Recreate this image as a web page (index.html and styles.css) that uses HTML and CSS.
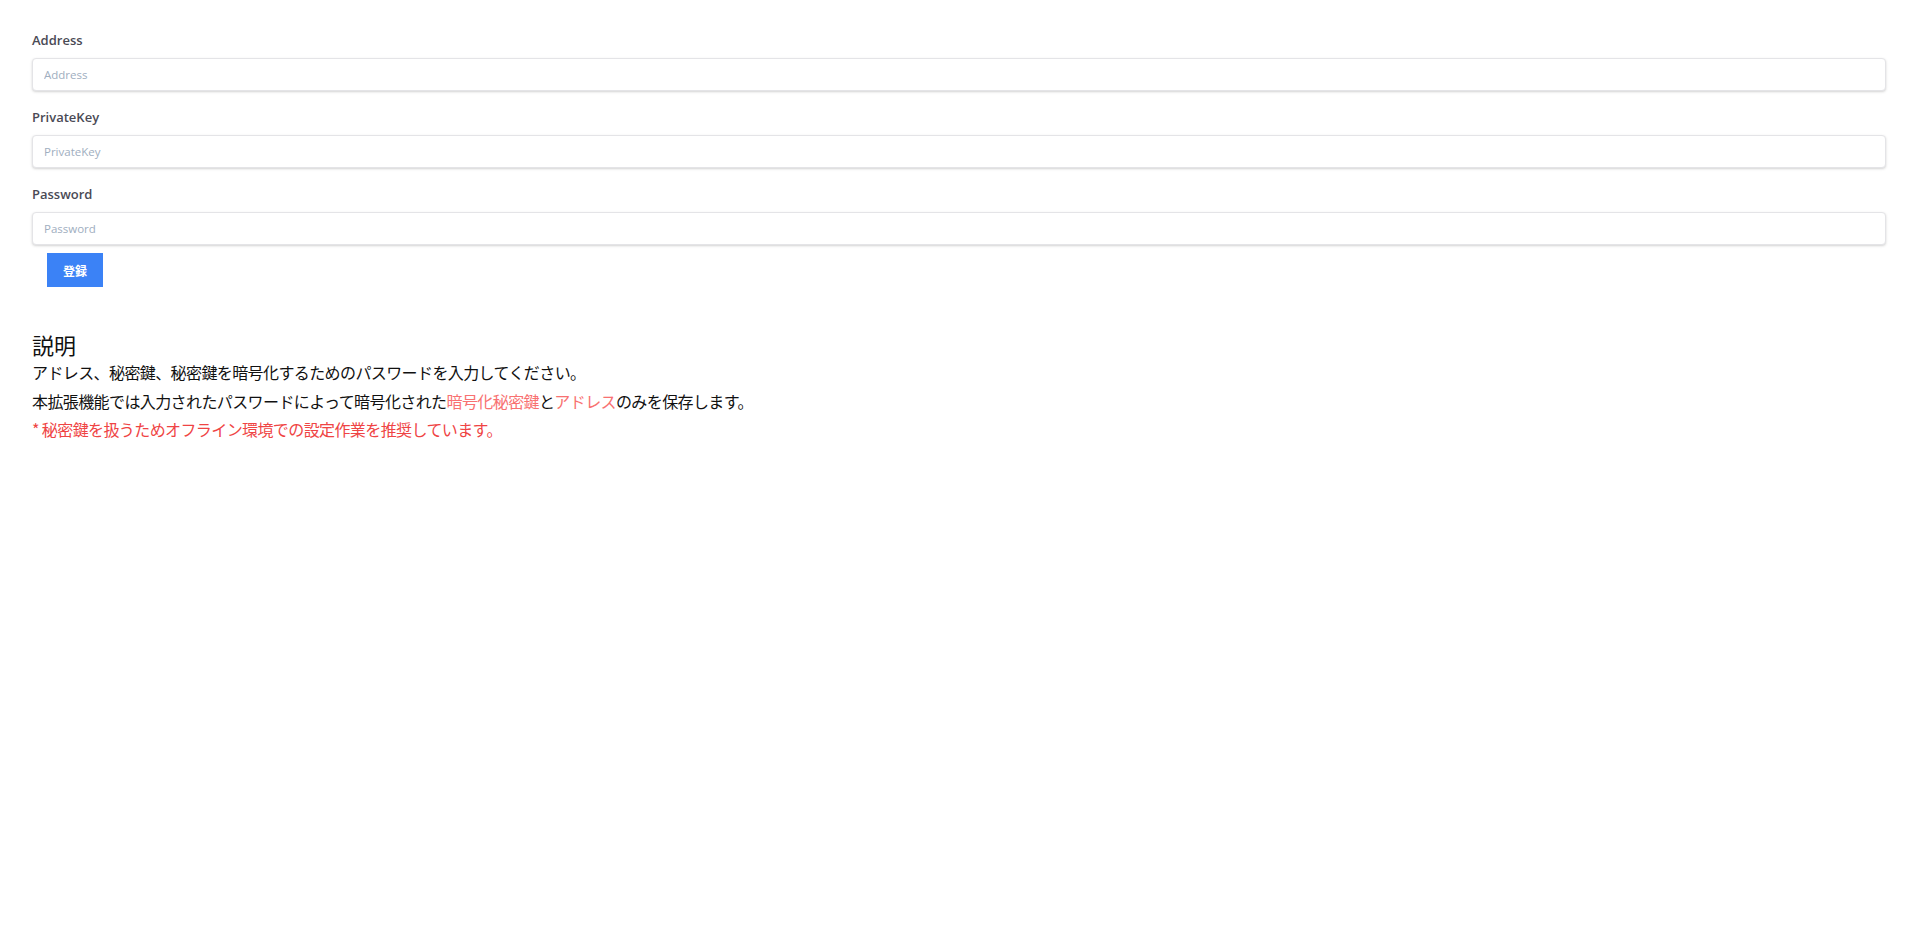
FILE: index.html
```html
<!DOCTYPE html>
<html lang="ja">
<head>
<meta charset="utf-8">
<title>Register</title>
<link rel="stylesheet" href="styles.css">
</head>
<body>
<div class="page">
  <form class="form">
    <div class="field">
      <label class="label" for="address">Address</label>
      <input class="input" id="address" type="text" placeholder="Address">
    </div>
    <div class="field">
      <label class="label" for="pk">PrivateKey</label>
      <input class="input" id="pk" type="text" placeholder="PrivateKey">
    </div>
    <div class="field last">
      <label class="label" for="pw">Password</label>
      <input class="input" id="pw" type="password" placeholder="Password">
    </div>
    <div class="actions">
      <button class="btn" type="button">登録</button>
    </div>
  </form>
  <section class="desc">
    <h2 class="desc-title">説明</h2>
    <p class="desc-line">アドレス、秘密鍵、秘密鍵を暗号化するためのパスワードを入力してください。</p>
    <p class="desc-line">本拡張機能では入力されたパスワードによって暗号化された<span class="hl">暗号化秘密鍵</span>と<span class="hl">アドレス</span>のみを保存します。</p>
    <p class="desc-line warn">*&nbsp;秘密鍵を扱うためオフライン環境での設定作業を推奨しています。</p>
  </section>
</div>
</body>
</html>
```

FILE: styles.css
```css
html, body {
  margin: 0;
  padding: 0;
  background: #ffffff;
}

body {
  font-family: "Open Sans", "Noto Sans CJK JP", sans-serif;
  color: #1a1a1a;
}

.page {
  padding: 30px 29px 0 32px;
}

.form {
  display: flex;
  flex-direction: column;
}

.field {
  display: flex;
  flex-direction: column;
  margin-bottom: 16px;
}

.field.last {
  margin-bottom: 8px;
}

.label {
  display: block;
  font-family: "Open Sans", sans-serif;
  font-size: 13px;
  font-weight: 600;
  line-height: 20px;
  color: #4a4a55;
  margin-bottom: 8px;
}

.input {
  box-sizing: border-box;
  width: 100%;
  height: 33px;
  padding: 0 11px;
  border: 1px solid #e4e4e7;
  border-radius: 4px;
  box-shadow: 0 1px 3px rgba(0, 0, 0, 0.12), 0 1px 2px rgba(0, 0, 0, 0.06);
  font-family: "Open Sans", sans-serif;
  font-size: 11.5px;
  color: #4a5568;
  background: #fff;
  outline: none;
}

.input::placeholder {
  color: #a0aec0;
}

.actions {
  display: flex;
  padding-left: 15px;
}

.btn {
  width: 56px;
  height: 34px;
  border: none;
  border-radius: 0;
  background: #3b82f6;
  color: #ffffff;
  font-family: "Noto Sans CJK JP", sans-serif;
  font-size: 12px;
  font-weight: 700;
  padding: 0;
}

.desc {
  margin-top: 43px;
  font-family: "Noto Sans CJK JP", sans-serif;
}

.desc-title {
  margin: 0;
  font-size: 22px;
  font-weight: 400;
  line-height: 28px;
  color: #111;
}

.desc-line {
  margin: 0;
  font-size: 16px;
  line-height: 28.5px;
  color: #111;
  letter-spacing: -0.6px;
}

.hl {
  color: #f87171;
}

.warn {
  color: #ef4444;
}
```
